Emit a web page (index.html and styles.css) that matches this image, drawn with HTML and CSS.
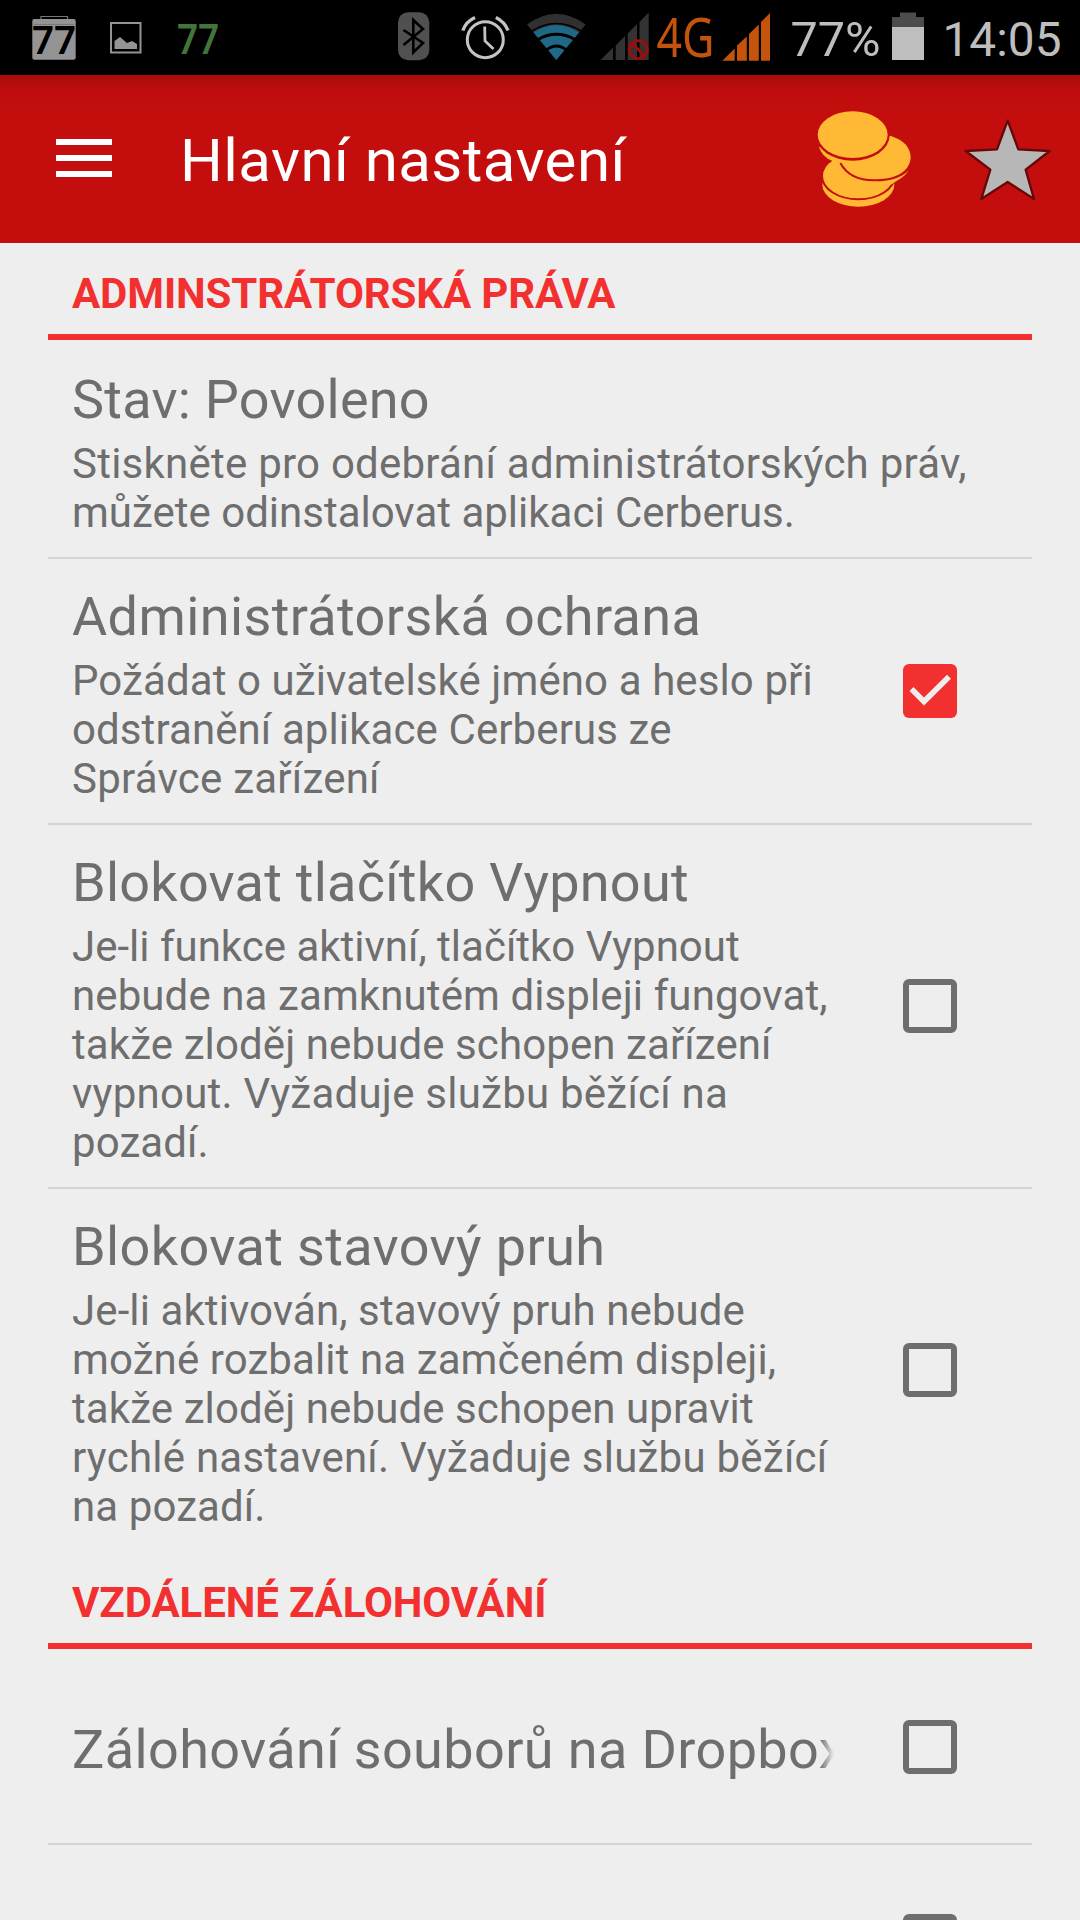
FILE: index.html
```html
<!DOCTYPE html>
<html lang="cs">
<head>
    <meta charset="UTF-8">
    <meta name="viewport" content="width=device-width, initial-scale=1.0">
    <title>Hlavní nastavení</title>
    <link rel="stylesheet" href="styles.css">
</head>
<body>
    <div class="status-bar">
        <div class="status-left">
            <svg class="calendar" width="44" height="75" viewBox="32 0 44 75">
                <path d="M41 20V16.500H67.500V20" fill="none" stroke="#777" stroke-width="1.200"/>
                <rect x="32.300" y="19" width="43.400" height="40.700" rx="2" fill="#949494"/>
                <path d="M34 24.500H74" stroke="#777" stroke-width="1"/>
                <text x="32" y="53.500" textLength="44" lengthAdjust="spacingAndGlyphs" font-family="Noto Sans, sans-serif" font-size="40" font-weight="600">77</text>
            </svg>
            <svg class="picture" width="32" height="75" viewBox="110 0 32 75">
                <rect x="111" y="23" width="29.500" height="29.500" fill="none" stroke="#949494" stroke-width="2"/>
                <path d="M114.500 49V41L120 37L127 43L132 41L137 44V49Z" fill="#949494"/>
            </svg>
            <svg class="temperature" width="42" height="75" viewBox="177 0 42 75">
                <text x="177" y="53.700" textLength="42" lengthAdjust="spacingAndGlyphs" font-family="Noto Sans, sans-serif" font-size="41" font-weight="600" fill="#42743b">77</text>
            </svg>
        </div>
        <div class="status-right">
            <svg class="bluetooth" width="32" height="75" viewBox="398 0 32 75">
                <rect x="398" y="12.300" width="31.300" height="48" rx="10" fill="#505050"/>
                <path d="M403.500 30L423 43L413.300 52.500V20L423 29L403.500 45" fill="none" stroke="#000" stroke-width="2.600"/>
            </svg>
            <svg class="alarm" width="48" height="75" viewBox="461 0 48 75">
                <g fill="none" stroke="#c4c4c4">
                    <circle cx="485.300" cy="39.700" r="18" stroke-width="3"/>
                    <path d="M462.800 30.500Q466 21.500 475 17.500M508 30.500Q504.500 21.500 495.800 17.500" stroke-width="3.300"/>
                    <path d="M484.700 26.500L485 41L493.500 49" stroke-width="2.800"/>
                </g>
            </svg>
            <svg class="wifi" width="60" height="75" viewBox="526 0 60 75">
                <path d="M556.300 60L527 24.500Q556.300 3 585.700 24.500Z" fill="#303030"/>
                <path d="M556.300 60L533.500 32.500Q556.300 17.500 579 32.500Z" fill="#1f6987"/>
                <path d="M538 39.500Q556.300 29 575 39.500M546 50.500Q556.300 41.500 567 50.500" fill="none" stroke="#000" stroke-width="2.800"/>
                <path d="M531 31.500Q556.300 15.500 582 31.500" fill="none" stroke="#000" stroke-width="1.500"/>
            </svg>
            <svg class="signal" width="49" height="75" viewBox="600 0 49 75">
                <path d="M600.500 60L613 47.500V60ZM615.700 60V45.500L625 36V60ZM627.700 60V33.500L637 24V60ZM639.500 60V22L648.700 12.500V60Z" fill="#333"/>
                <circle cx="638.300" cy="49.700" r="9" fill="none" stroke="#a30b0b" stroke-width="2.800"/>
                <path d="M632 43L644.500 56" stroke="#a30b0b" stroke-width="2.800"/>
            </svg>
            <svg class="network" width="57" height="75" viewBox="657 0 57 75">
                <text x="656.500" y="57" textLength="58" lengthAdjust="spacingAndGlyphs" font-family="Noto Sans, sans-serif" font-size="55" fill="#c4530b">4G</text>
            </svg>
            <svg class="signal-full" width="49" height="75" viewBox="722 0 49 75">
                <path d="M722.300 60.800L734.700 48.500V60.800ZM737 60.800V45.500L746.800 36.500V60.800ZM749 60.800V34L758.800 24.500V60.800ZM761 60.800V22L770 13V60.800Z" fill="#c4530b"/>
            </svg>
            <svg class="percent" width="90" height="75" viewBox="791 0 90 75">
                <text x="790.500" y="56" textLength="90" lengthAdjust="spacingAndGlyphs" font-family="Roboto, sans-serif" font-size="48" fill="#bebebe">77%</text>
            </svg>
            <svg class="battery" width="32" height="75" viewBox="892 0 32 75">
                <path d="M892 28V17H900V12.500H916V17H924V28Z" fill="#4c4c4c"/>
                <rect x="892" y="27" width="32" height="33" fill="#bebebe"/>
            </svg>
            <svg class="clock" width="118" height="75" viewBox="944 0 118 75">
                <text x="942.500" y="56" textLength="119" lengthAdjust="spacingAndGlyphs" font-family="Roboto, sans-serif" font-size="48" fill="#bebebe">14:05</text>
            </svg>
        </div>
    </div>

    <div class="app-bar">
        <div class="menu">
            <span></span>
            <span></span>
            <span></span>
        </div>
        <h1>Hlavní nastavení</h1>
        <svg class="coins" width="97" height="98" viewBox="105 60 291 294">
            <ellipse cx="235" cy="284" rx="108" ry="66" fill="#ffb934"/>
            <ellipse cx="235" cy="258" rx="109" ry="70" fill="#ffb934" stroke="#c40e0d" stroke-width="6"/>
            <path d="M182 220C215 282 320 302 387 235Q384 255 345 276Q330 292 275 284Z" fill="#ffb934"/>
            <path d="M331 137C374 151 392 173 392 204C389 246 340 271 286 271C235 269 196 249 181 219L165 207L230 145Z" fill="#ffb934"/>
            <path d="M181 219C200 254 238 272 286 271C335 271 371 256 387 235" fill="none" stroke="#c40e0d" stroke-width="6"/>
            <path d="M117 170Q125 200 158 213Q180 219 230 215L280 190Z" fill="#ffb934"/>
            <ellipse cx="218" cy="136" rx="111" ry="76" fill="#c40e0d"/>
            <ellipse cx="218" cy="134" rx="105" ry="70" fill="#ffb934"/>
        </svg>
        <svg class="star" width="88" height="84" viewBox="552 78 264 252">
            <path d="M683 89L715 175L809 180L737 236L762 324L683 273L604 324L631 236L557 180L651 175Z" fill="#b7b7b7" stroke="#660809" stroke-width="7" stroke-linejoin="round"/>
        </svg>
    </div>

    <div class="settings">
        <h2>ADMINSTRÁTORSKÁ PRÁVA</h2>
        <div class="row first">
            <div class="text">
                <h3 class="tight">Stav: Povoleno</h3>
                <p><span class="wide">Stiskněte pro odebrání administrátorských práv,</span><br><span class="narrow">můžete odinstalovat aplikaci Cerberus.</span></p>
            </div>
        </div>
        <div class="row">
            <div class="text">
                <h3>Administrátorská ochrana</h3>
                <p>Požádat o uživatelské jméno a heslo při<br>odstranění aplikace Cerberus ze<br><span class="wide">Správce zařízení</span></p>
            </div>
            <div class="checkbox checked">
                <svg width="54" height="54" viewBox="0 0 54 54">
                    <path d="M8.500 25L21 37.500L46 12.700" fill="none" stroke="#eee" stroke-width="5.600"/>
                </svg>
            </div>
        </div>
        <div class="row">
            <div class="text">
                <h3 class="tight">Blokovat tlačítko Vypnout</h3>
                <p><span class="narrow">Je-li funkce aktivní, tlačítko Vypnout</span><br>nebude na zamknutém displeji fungovat,<br>takže zloděj nebude schopen zařízení<br><span class="wide">vypnout. Vyžaduje službu běžící na</span><br>pozadí.</p>
            </div>
            <div class="checkbox"></div>
        </div>
        <div class="row last">
            <div class="text">
                <h3>Blokovat stavový pruh</h3>
                <p>Je-li aktivován, stavový pruh nebude<br>možné rozbalit na zamčeném displeji,<br>takže zloděj nebude schopen upravit<br><span class="wide">rychlé nastavení. Vyžaduje službu běžící</span><br>na pozadí.</p>
            </div>
            <div class="checkbox"></div>
        </div>

        <h2>VZDÁLENÉ ZÁLOHOVÁNÍ</h2>
        <div class="row first single">
            <div class="text">
                <h3 class="fade">Zálohování souborů na Dropbox</h3>
            </div>
            <div class="checkbox"></div>
        </div>
        <div class="row single">
            <div class="text"></div>
            <div class="checkbox"></div>
        </div>
    </div>
</body>
</html>
```

FILE: styles.css
```css
* {
    box-sizing: border-box;
}

body {
    display: flex;
    flex-direction: column;
    font-family: Roboto, sans-serif;
    background-color: #eee;
    color: #6e6e6e;
    margin: 0;
    height: 1920px;
    overflow: hidden;
}

h1, h2, h3, p {
    margin: 0;
    white-space: nowrap;
}

svg {
    display: block;
    flex-shrink: 0;
    overflow: visible;
}

/* status bar */
.status-bar {
    display: flex;
    flex-shrink: 0;
    justify-content: space-between;
    height: 75px;
    padding: 0 18px 0 32px;
    background-color: #000;
}

.status-left, .status-right {
    display: flex;
}

.picture {
    margin-left: 34px;
}

.temperature {
    margin-left: 35px;
}

.alarm {
    margin-left: 31px;
}

.wifi {
    margin-left: 17px;
}

.signal {
    margin-left: 14px;
}

.network, .signal-full {
    margin-left: 8px;
}

.percent, .clock {
    margin-left: 20px;
}

.battery {
    margin-left: 11px;
}

/* app bar */
.app-bar {
    display: flex;
    flex-shrink: 0;
    align-items: center;
    height: 168px;
    padding: 0 28px 0 56px;
    background: linear-gradient(#a60c0b, #bc0d0c 14px, #c40e0d 36px);
}

.menu {
    display: flex;
    flex-direction: column;
    gap: 10px;
    width: 56px;
    margin-bottom: 2px;
}

.menu span {
    height: 6px;
    background-color: #fff;
}

h1 {
    flex: 1;
    margin-left: 68px;
    padding-top: 4px;
    color: #fff;
    font-size: 60px;
    font-weight: 400;
    line-height: 70px;
    letter-spacing: 0.45px;
}

.star {
    margin-left: 52px;
}

/* settings list */
.settings {
    flex: 1;
    min-height: 0;
    padding: 0 48px;
    overflow: hidden;
}

h2 {
    height: 97px;
    padding: 26px 24px 0;
    border-bottom: 6px solid #f23030;
    color: #f23030;
    font-size: 42px;
    font-weight: 700;
    line-height: 49px;
    letter-spacing: -0.12px;
}

.row {
    display: flex;
    align-items: center;
    justify-content: space-between;
    padding: 0 75px 0 24px;
    border-bottom: 2px solid #d4d4d4;
}

.first {
    margin-top: 2px;
}

.last {
    border-bottom: none;
    margin-bottom: 1px;
}

.text {
    width: 762px;
    padding: 26px 0 20px;
}

.single {
    height: 194px;
}

.single .text {
    padding: 0;
}

h3 {
    margin-bottom: 8px;
    font-size: 54px;
    font-weight: 400;
    line-height: 63px;
    letter-spacing: 0.38px;
}

p {
    font-size: 42px;
    line-height: 49px;
    letter-spacing: 0.1px;
}

.wide {
    letter-spacing: 0.24px;
}

.narrow {
    letter-spacing: 0;
}

.tight {
    letter-spacing: 0.25px;
}

.fade {
    margin-bottom: 0;
    padding-top: 5px;
    overflow: hidden;
    -webkit-mask-image: linear-gradient(to right, #000 748px, transparent 762px);
    mask-image: linear-gradient(to right, #000 748px, transparent 762px);
}

.checkbox {
    width: 54px;
    height: 54px;
    border: 6px solid #6e6e6e;
    border-radius: 6px;
}

.checked {
    border: none;
    background-color: #f23030;
}
```
